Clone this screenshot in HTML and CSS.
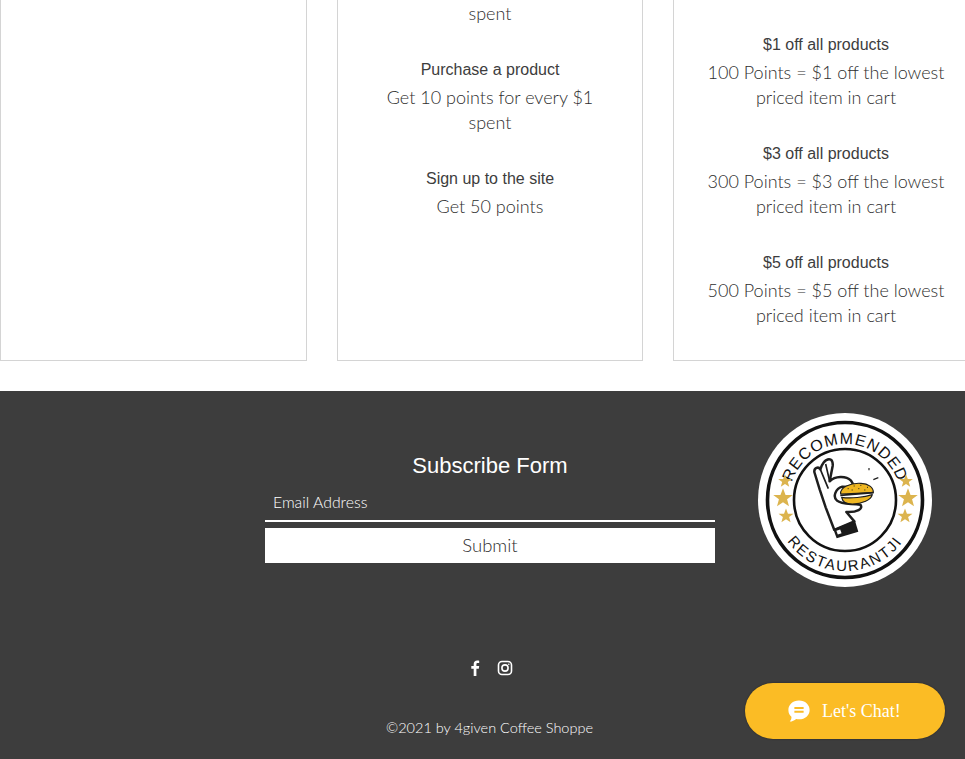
FILE: index.html
```html
<!DOCTYPE html>
<html lang="en">
<head>
<meta charset="utf-8">
<title>4given Coffee Shoppe</title>
<link rel="stylesheet" href="styles.css">
</head>
<body>
<main class="cards">
  <section class="card"></section>
  <section class="card card-earn">
    <p class="body">spent</p>
    <div class="item">
      <h3 class="title">Purchase a product</h3>
      <p class="body">Get 10 points for every $1 spent</p>
    </div>
    <div class="item">
      <h3 class="title">Sign up to the site</h3>
      <p class="body">Get 50 points</p>
    </div>
  </section>
  <section class="card card-redeem">
    <div class="item">
      <h3 class="title">$1 off all products</h3>
      <p class="body">100 Points = $1 off the lowest priced item in cart</p>
    </div>
    <div class="item">
      <h3 class="title">$3 off all products</h3>
      <p class="body">300 Points = $3 off the lowest priced item in cart</p>
    </div>
    <div class="item">
      <h3 class="title">$5 off all products</h3>
      <p class="body">500 Points = $5 off the lowest priced item in cart</p>
    </div>
  </section>
</main>
<footer class="footer">
  <div class="footer-top">
    <form class="subscribe">
      <h2 class="subscribe-title">Subscribe Form</h2>
      <div class="email">Email Address</div>
      <div class="submit">Submit</div>
    </form>
    <svg class="badge" viewBox="0 0 174 174" width="174" height="174" role="img" aria-label="Recommended Restaurantji">
      <defs>
        <path id="arc-top" d="M 87 143 A 56 56 0 1 1 87.01 143"/>
        <path id="arc-bottom" d="M 87 16 A 71 71 0 0 0 87 158 A 71 71 0 0 0 87 16"/>
        <path id="star" d="M0-6.500 1.700-2 6.500-2 2.700.9 4 5.500 0 2.800-4 5.500-2.700.9-6.500-2-1.700-2Z"/>
      </defs>
      <circle cx="87" cy="87" r="87" fill="#fff"/>
      <circle cx="87" cy="87" r="77.500" fill="none" stroke="#111" stroke-width="3.600"/>
      <circle cx="87" cy="87" r="51" fill="none" stroke="#111" stroke-width="2.600"/>
      <text class="badge-text"><textPath href="#arc-top" startOffset="50%" text-anchor="middle">RECOMMENDED</textPath></text>
      <text class="badge-text badge-text-low"><textPath href="#arc-bottom" startOffset="50%" text-anchor="middle">RESTAURANTJI</textPath></text>
      <g fill="#dcb44e">
        <use href="#star" transform="translate(27 68) scale(1.05)"/>
        <use href="#star" transform="translate(25 85) scale(1.5)"/>
        <use href="#star" transform="translate(28 103) scale(1.15)"/>
        <use href="#star" transform="translate(148 68) scale(1.05)"/>
        <use href="#star" transform="translate(150 85) scale(1.5)"/>
        <use href="#star" transform="translate(147 103) scale(1.15)"/>
      </g>
      <g transform="translate(47 37) scale(.3333)">
        <path d="M88 240 62 172 44 118 28 66C27 54 40 48 46 58 50 44 60 28 72 28 82 28 84 38 83 48L74 94C90 78 122 76 138 92L150 112 112 110C92 116 82 140 96 152 110 164 136 160 166 164 176 176 156 188 124 186L148 214Z" fill="#fff" stroke="#1e1e1e" stroke-width="7.500" stroke-linejoin="round"/>
        <path d="M46 58 70 116M62 42 74 94" fill="none" stroke="#1e1e1e" stroke-width="5"/>
        <path d="M85 238 150 212 160 245 95 265Z" fill="#1a1a1a"/>
        <rect x="96" y="240" width="12" height="12" fill="#fff" transform="rotate(-20 102 246)"/>
        <path d="M107 132C104 112 136 98 168 100 190 101 206 112 205 128Z" fill="#efb722" stroke="#1e1e1e" stroke-width="3.500" stroke-linejoin="round"/>
        <path d="M106 136 205 128" stroke="#1e1e1e" stroke-width="5"/>
        <path d="M110 142C136 146 178 142 202 134 198 150 172 162 142 162 124 162 112 154 110 142Z" fill="#efb722" stroke="#1e1e1e" stroke-width="3.500" stroke-linejoin="round"/>
        <path d="M128 116h3M146 108h3M166 106h3M186 112h3M140 120h3M160 116h3M178 120h3" stroke="#1e1e1e" stroke-width="3"/>
        <path d="M192 54v7M205 89 220 83" stroke="#1e1e1e" stroke-width="3.500"/>
      </g>
    </svg>
  </div>
  <nav class="social">
    <a class="social-link" aria-label="Facebook">
      <svg viewBox="0 0 20 20" width="20" height="20"><path d="M11.400 18v-7.200h2.400l.4-2.700h-2.800V6.400c0-.8.3-1.300 1.400-1.300h1.400V2.700c-.3 0-1.100-.1-2-.1-2.100 0-3.500 1.200-3.500 3.500v2H6.300v2.700h2.400V18Z" fill="#fff"/></svg>
    </a>
    <a class="social-link" aria-label="Instagram">
      <svg viewBox="0 0 20 20" width="20" height="20" fill="none" stroke="#fff"><rect x="3.500" y="3.500" width="13" height="13" rx="3.500" stroke-width="1.600"/><circle cx="10" cy="10" r="3.100" stroke-width="1.600"/><circle cx="13.800" cy="6.200" r=".8" fill="#fff" stroke="none"/></svg>
    </a>
  </nav>
  <p class="copyright">©2021 by 4given Coffee Shoppe</p>
  <div class="chat">
    <svg class="chat-icon" viewBox="0 0 26 26" width="24" height="24"><path d="M13 1.500C6.300 1.500 1.500 6 1.500 11.800c0 3.400 1.400 5.800 3.300 7.500.3 2-.7 4-1.800 5.200 2.600-.1 5.200-1.300 6.900-2.900 1.100.3 2 .4 3.100.4 6.700 0 11.500-4.500 11.500-10.200S19.700 1.500 13 1.500Z" fill="#fff"/><path d="M8 9.800h10M8 13.700h10" stroke="#fbbc25" stroke-width="2.200"/></svg>
    <span class="chat-label">Let's Chat!</span>
  </div>
</footer>
</body>
</html>
```
FILE: styles.css
```css
* { box-sizing: border-box; }
html, body { margin: 0; height: 759px; overflow: hidden; background: #fff; }
body { font-family: "Lato", "Liberation Sans", sans-serif; color: #3d3d3d; }

.cards {
  display: grid;
  grid-template-columns: 307px 306px 306px;
  column-gap: 30px;
  width: 980px;
  height: 361px;
}
.card {
  border: 1px solid #d4d4d4;
  border-top: 0;
  text-align: center;
  padding-left: 30px;
  padding-right: 30px;
}
.card-earn { padding-top: 1px; padding-left: 40px; padding-right: 40px; }
.card-redeem { padding-top: 32px; }

.item { margin-top: 30.400px; }
.card-redeem .item:first-child { margin-top: 0; }

.title {
  margin: 0 0 3px;
  font: 400 16px/25px "Liberation Sans", Arial, sans-serif;
  color: #3d3d3d;
}
.body {
  margin: 0;
  font-size: 18px;
  font-weight: 300;
  line-height: 25.300px;
  color: #2e2e2e;
}

.footer {
  position: relative;
  margin-top: 30px;
  height: 368px;
  width: 980px;
  background: #3d3d3d;
  color: #fff;
}
.footer-top {
  display: flex;
  align-items: flex-start;
  gap: 43px;
  padding: 22px 0 0 265px;
  height: 267px;
}
.subscribe { width: 450px; padding-top: 36px; }
.subscribe-title {
  margin: 0;
  text-align: center;
  font: 400 22px/34px "Liberation Sans", Arial, sans-serif;
  color: #fff;
}
.email {
  height: 39px;
  padding: 0 8px;
  line-height: 38px;
  font-size: 15.800px;
  font-weight: 300;
  color: #fff;
  border-bottom: 2px solid #fff;
}
.submit {
  margin-top: 6px;
  height: 35px;
  line-height: 34px;
  background: #fff;
  color: #2e2e2e;
  text-align: center;
  font-size: 18.500px;
  font-weight: 300;
}
.badge { flex: none; display: block; }
.badge-text {
  font: 400 16px "Liberation Sans", Arial, sans-serif;
  letter-spacing: 1px;
  fill: #111;
}
.badge-text-low { font-size: 15px; letter-spacing: 1.900px; }

.social { display: flex; justify-content: center; gap: 10px; }
.social-link { display: block; width: 20px; height: 20px; }
.social-link svg { display: block; }

.copyright {
  margin: 40px 0 0;
  width: 979px;
  text-align: center;
  font-size: 14.500px;
  font-weight: 300;
  line-height: 20px;
  color: #fff;
}

.chat {
  position: absolute;
  left: 745px;
  top: 292px;
  width: 200px;
  height: 56px;
  border-radius: 28px;
  background: #fbbc25;
  display: flex;
  align-items: center;
  padding-left: 42px;
  gap: 11px;
  box-shadow: 0 0 2px rgba(0, 0, 0, .4);
}
.chat-icon { display: block; flex: none; }
.chat-label {
  font: 400 18px "Liberation Serif", "Times New Roman", serif;
  color: #fff;
}
```
